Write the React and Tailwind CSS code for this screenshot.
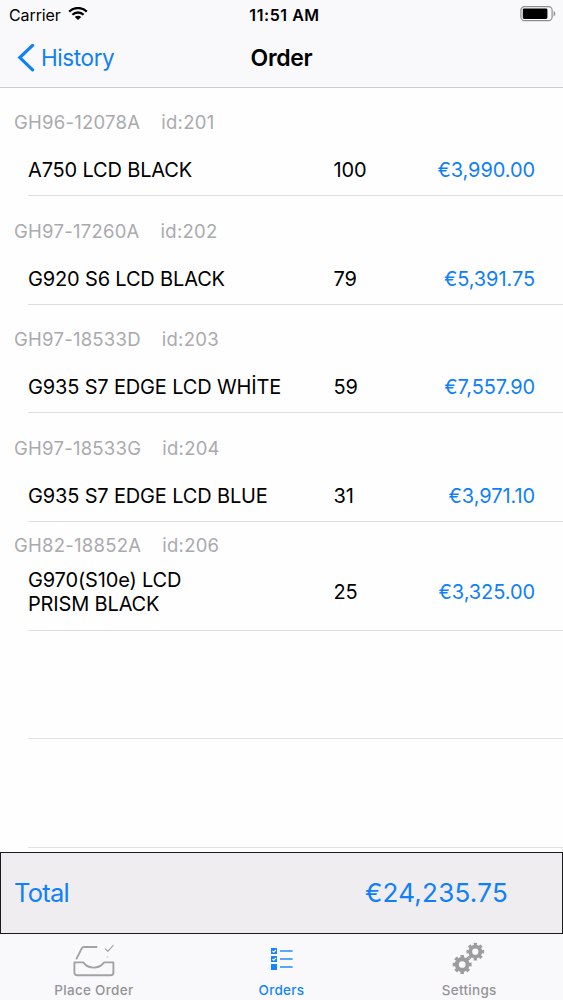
import React from "react";

const orders = [
  { code: "GH96-12078A", id: 201, name: "A750 LCD BLACK", qty: 100, price: "€3,990.00" },
  { code: "GH97-17260A", id: 202, name: "G920 S6 LCD BLACK", qty: 79, price: "€5,391.75" },
  { code: "GH97-18533D", id: 203, name: "G935 S7 EDGE LCD WHİTE", qty: 59, price: "€7,557.90" },
  { code: "GH97-18533G", id: 204, name: "G935 S7 EDGE LCD BLUE", qty: 31, price: "€3,971.10" },
  { code: "GH82-18852A", id: 206, name: "G970(S10e) LCD\nPRISM BLACK", qty: 25, price: "€3,325.00" },
];

const WifiIcon = () => (
  <svg width="20" height="14" viewBox="0 0 20 14" fill="none" stroke="#000" strokeWidth="2.3">
    <path d="M1.2 4.6a12.6 12.6 0 0 1 17.6 0" />
    <path d="M4.4 7.8a8 8 0 0 1 11.2 0" />
    <path d="M10 13.1 6.8 10a4.6 4.6 0 0 1 6.4 0z" fill="#000" stroke="none" />
  </svg>
);

const BatteryIcon = () => (
  <svg width="36" height="16" viewBox="0 0 36 16">
    <rect x="0.9" y="0.7" width="31.2" height="14" rx="3.6" fill="none" stroke="#8f8f92" strokeWidth="1.2" />
    <rect x="2.8" y="2.5" width="24.6" height="10.4" rx="1.3" fill="#000" />
    <path d="M33.6 5c2.2.8 2.2 4.6 0 5.4z" fill="#8f8f92" />
  </svg>
);

const TrayIcon = () => (
  <svg
    width="42"
    height="36"
    viewBox="0 0 42 36"
    fill="none"
    stroke="#a2a2a4"
    strokeWidth="1.9"
    strokeLinecap="round"
    strokeLinejoin="round"
  >
    <path d="M3.6 17.6 8.6 7.6Q9.4 6 11.2 6H23.5" />
    <path d="M1.4 21.4H10c1.4 0 2 5.2 10.7 5.2S30 21.4 31.4 21.4H40.4V31.5a2.8 2.8 0 0 1-2.8 2.8H4.2a2.8 2.8 0 0 1-2.8-2.8z" />
    <path d="m32.4 8 2.5 2.4 5.3-6" strokeWidth="1.1" />
    <path d="M34 16h.8" strokeWidth=".7" />
  </svg>
);

const ListIcon = () => (
  <svg width="24" height="24" viewBox="0 0 24 24" fill="#1485fb">
    {[1, 9, 17].map((y) => (
      <g key={y}>
        <rect x="1" y={y} width="6" height="6" />
        <rect x="10" y={y + 2.3} width="12.6" height="1.4" />
      </g>
    ))}
    <path d="m2.5 4 1.2 1.2L6 2.8M2.5 12l1.2 1.2L6 10.8" fill="none" stroke="#fff" strokeWidth="1.1" />
  </svg>
);

const Gear = ({ cx, cy, r }) => (
  <g fill="none" stroke="#9c9c9e">
    <circle cx={cx} cy={cy} r={r * 0.58} strokeWidth={r * 0.44} />
    <circle
      cx={cx}
      cy={cy}
      r={r * 0.87}
      strokeWidth={r * 0.3}
      pathLength="16"
      strokeDasharray="1.1 0.9"
      strokeDashoffset="0.55"
    />
  </g>
);

const GearsIcon = () => (
  <svg width="32" height="32" viewBox="0 0 32 32" overflow="visible">
    <Gear cx={9.2} cy={21.5} r={9.3} />
    <Gear cx={22.3} cy={8.7} r={8.7} />
  </svg>
);

const OrderRow = ({ order }) => {
  const wraps = order.name.includes("\n");
  return (
    <div className="h-[108.6px] flex flex-col">
      <div
        className={`pl-[14px] flex h-6 items-center text-[18.5px] tracking-[0.25px] text-[#aaaaae] ${
          wraps ? "mt-[11.4px] mb-[11px]" : "mt-[23.3px] mb-[23.2px]"
        }`}
      >
        <span className="mr-[21px]">{order.code}</span>
        <span>id:{order.id}</span>
      </div>
      <div className="ml-[28px] flex flex-1 items-start border-b border-[#dddde0]">
        <div className="flex w-full items-center pr-[28px] text-[20px] leading-[24px]">
          <p className="w-[305.5px] whitespace-pre tracking-[-0.16px]">{order.name}</p>
          <p className="tracking-[-0.1px]">{order.qty}</p>
          <p className="ml-auto tracking-[-0.08px] text-[#0f80fa]">{order.price}</p>
        </div>
      </div>
    </div>
  );
};

const Tab = ({ label, active, children }) => (
  <div
    className={`flex flex-1 flex-col items-center text-[13.5px] font-medium ${
      active ? "text-[#1485fb]" : "text-[#949497]"
    }`}
  >
    <div className="flex h-[47px] items-center justify-center pt-[3px]">{children}</div>
    <span className="leading-[18px] tracking-[0.3px]">{label}</span>
  </div>
);

const App = () => {
  return (
    <div
      className="flex h-[1000px] w-[563px] flex-col overflow-hidden bg-[#fefefe] text-black"
      style={{ fontFamily: "Inter, sans-serif" }}
    >
      <header className="h-[88px] shrink-0 border-b border-[#cdccd0] bg-[#f9f8fb]">
        <div className="grid h-[29px] grid-cols-3 items-center pr-[7px] pl-[9px]">
          <div className="flex items-center gap-[7px] text-[16px]">
            <span className="tracking-[-0.1px]">Carrier</span>
            <div className="pb-[1px]">
              <WifiIcon />
            </div>
          </div>
          <span className="pl-[4px] text-center text-[16px] font-semibold tracking-[0.55px]">11:51 AM</span>
          <div className="flex justify-end pb-[1px]">
            <BatteryIcon />
          </div>
        </div>
        <div className="grid h-[58px] grid-cols-3 items-center pl-[17px] pr-[17px]">
          <div className="flex items-center gap-[6px] text-[#0f80fa]">
            <svg
              width="18"
              height="28"
              viewBox="0 0 18 28"
              fill="none"
              stroke="currentColor"
              strokeWidth="3.2"
              strokeLinecap="round"
            >
              <path d="M15.6 1.4 2.8 13.6l12.8 12.2" />
            </svg>
            <span className="text-[22.5px] tracking-[-0.4px]">History</span>
          </div>
          <h1 className="text-center text-[23px] font-semibold tracking-[-0.3px]">Order</h1>
        </div>
      </header>

      <main className="-mt-[0.3px] flex-1 overflow-hidden">
        {orders.map((order) => (
          <OrderRow key={order.id} order={order} />
        ))}
        <div className="ml-[28px] h-[108.6px] border-b border-[#e3e3e6]" />
        <div className="ml-[28px] h-[108.6px] border-b border-[#e3e3e6]" />
      </main>

      <section className="flex h-[82px] shrink-0 items-center justify-between border border-[#1a1a1c] bg-[#efedf0] pr-[54px] pb-[1px] pl-[13px] text-[26px] text-[#0f80fa]">
        <span className="pt-[1px] text-[25.5px] tracking-[-0.75px]">Total</span>
        <span className="tracking-[0.25px]">€24,235.75</span>
      </section>

      <nav className="flex h-[66px] shrink-0 bg-[#f9f8fb]">
        <Tab label="Place Order">
          <TrayIcon />
        </Tab>
        <Tab label="Orders" active>
          <ListIcon />
        </Tab>
        <Tab label="Settings">
          <GearsIcon />
        </Tab>
      </nav>
    </div>
  );
};

export default App;
